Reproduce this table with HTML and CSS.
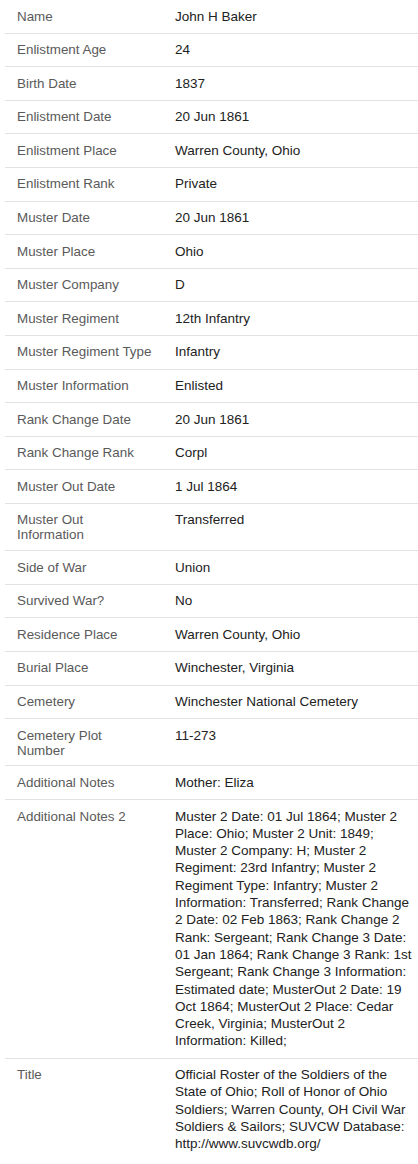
FILE: index.html
```html
<!DOCTYPE html>
<html>
<head>
<meta charset="utf-8">
<link rel="stylesheet" href="styles.css">
</head>
<body>
<div class="facts">
  <div class="row"><div class="label">Name</div><div class="value">John H Baker</div></div>
  <div class="row"><div class="label">Enlistment Age</div><div class="value">24</div></div>
  <div class="row"><div class="label">Birth Date</div><div class="value">1837</div></div>
  <div class="row"><div class="label">Enlistment Date</div><div class="value">20 Jun 1861</div></div>
  <div class="row"><div class="label">Enlistment Place</div><div class="value">Warren County, Ohio</div></div>
  <div class="row"><div class="label">Enlistment Rank</div><div class="value">Private</div></div>
  <div class="row"><div class="label">Muster Date</div><div class="value">20 Jun 1861</div></div>
  <div class="row"><div class="label">Muster Place</div><div class="value">Ohio</div></div>
  <div class="row"><div class="label">Muster Company</div><div class="value">D</div></div>
  <div class="row"><div class="label">Muster Regiment</div><div class="value">12th Infantry</div></div>
  <div class="row"><div class="label">Muster Regiment Type</div><div class="value">Infantry</div></div>
  <div class="row"><div class="label">Muster Information</div><div class="value">Enlisted</div></div>
  <div class="row"><div class="label">Rank Change Date</div><div class="value">20 Jun 1861</div></div>
  <div class="row"><div class="label">Rank Change Rank</div><div class="value">Corpl</div></div>
  <div class="row"><div class="label">Muster Out Date</div><div class="value">1 Jul 1864</div></div>
  <div class="row"><div class="label">Muster Out Information</div><div class="value">Transferred</div></div>
  <div class="row"><div class="label">Side of War</div><div class="value">Union</div></div>
  <div class="row"><div class="label">Survived War?</div><div class="value">No</div></div>
  <div class="row"><div class="label">Residence Place</div><div class="value">Warren County, Ohio</div></div>
  <div class="row"><div class="label">Burial Place</div><div class="value">Winchester, Virginia</div></div>
  <div class="row"><div class="label">Cemetery</div><div class="value">Winchester National Cemetery</div></div>
  <div class="row"><div class="label">Cemetery Plot Number</div><div class="value">11-273</div></div>
  <div class="row"><div class="label">Additional Notes</div><div class="value">Mother: Eliza</div></div>
  <div class="row"><div class="label">Additional Notes 2</div><div class="value">Muster 2 Date: 01 Jul 1864; Muster 2 Place: Ohio; Muster 2 Unit: 1849; Muster 2 Company: H; Muster 2 Regiment: 23rd Infantry; Muster 2 Regiment Type: Infantry; Muster 2 Information: Transferred; Rank Change 2 Date: 02 Feb 1863; Rank Change 2 Rank: Sergeant; Rank Change 3 Date: 01 Jan 1864; Rank Change 3 Rank: 1st Sergeant; Rank Change 3 Information: Estimated date; MusterOut 2 Date: 19 Oct 1864; MusterOut 2 Place: Cedar Creek, Virginia; MusterOut 2 Information: Killed;</div></div>
  <div class="row last"><div class="label">Title</div><div class="value">Official Roster of the Soldiers of the State of Ohio; Roll of Honor of Ohio Soldiers; Warren County, OH Civil War Soldiers &amp; Sailors; SUVCW Database: http://www.suvcwdb.org/</div></div>
</div>
</body>
</html>
```

FILE: styles.css
```css
html, body {
  margin: 0;
  padding: 0;
  background: #ffffff;
}
body {
  font-family: "Liberation Sans", Arial, sans-serif;
}
.facts {
  margin-left: 5px;
}
.row {
  display: grid;
  grid-template-columns: 170px 1fr;
  border-bottom: 1px solid #e2e2e2;
  padding: 7.5px 0 7.8px 0;
}
.row.last {
  border-bottom: none;
}
.label {
  padding-left: 12px;
  padding-right: 22px;
  padding-top: 1px;
  font-size: 13.4px;
  line-height: 15px;
  color: #5a5a5a;
}
.value {
  font-size: 13.5px;
  line-height: 17.3px;
  color: #222222;
}
```
